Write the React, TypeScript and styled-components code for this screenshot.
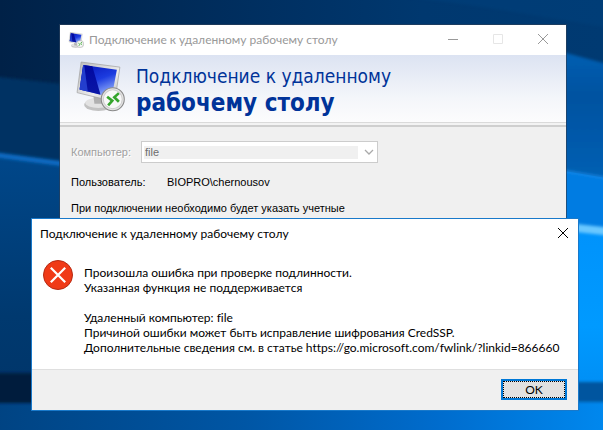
import React from "react";
import styled, { createGlobalStyle } from "styled-components";

const Global = createGlobalStyle`
  * { box-sizing: border-box; }
  html, body, #root { height: 100%; margin: 0; }
  body { font-family: Lato, "Noto Sans", sans-serif; font-size: 12px; line-height: 15px; font-variant-ligatures: none; color: #000; }
  button, select { font: inherit; color: inherit; }
  h1, h2, p { margin: 0; font-weight: 400; }
  svg { flex-shrink: 0; }
`;

const Desktop = styled.main`
  position: relative;
  height: 100%;
  overflow: hidden;
  background: #003a78;
`;

const Wallpaper = styled.svg`
  position: absolute;
  inset: 0;
  width: 100%;
  height: 100%;
`;

const Window = styled.section`
  position: absolute;
  display: flex;
  flex-direction: column;
`;

const MainWindow = styled(Window)`
  top: 25px;
  left: 60px;
  right: 37px;
  min-height: 300px;
  background: #f0f0f0;
  box-shadow: 0 0 0 1px rgba(40, 62, 90, 0.7);
`;

const ErrorDialog = styled(Window)`
  top: 218px;
  left: 31px;
  right: 24px;
  background: #fff;
  border: 1px solid #1979ca;
`;

const TitleBar = styled.header<{ $active?: boolean }>`
  display: flex;
  align-items: center;
  height: 30px;
  padding-left: 8px;
  background: #fff;
  color: ${(p) => (p.$active ? "#000" : "#999")};
`;

const Title = styled.h1`
  flex: 1;
  font-size: 12px;
  line-height: 16px;
  white-space: nowrap;
`;

const TitleIcon = styled.span`
  display: flex;
  margin-right: 5px;
`;

const Caption = styled.button<{ $width: number }>`
  display: grid;
  place-items: center;
  width: ${(p) => p.$width}px;
  height: 30px;
  padding: 0 0 2px;
  border: 0;
  background: none;
  &:disabled { color: #e6e6e6; }
`;

const Banner = styled.div`
  display: flex;
  gap: 11px;
  height: 67px;
  padding: 6px 14px;
  background: linear-gradient(#dce3f2, #f4f6fa 65%, #fcfcfd);
`;

const BannerText = styled.h2`
  padding-top: 2px;
  font-family: "DejaVu Sans Condensed", "DejaVu Sans", sans-serif;
  font-size: 19px;
  line-height: 27px;
  color: #003399;
  white-space: nowrap;
  strong { display: block; font-size: 24px; }
`;

const Divider = styled.div`
  height: 5px;
  border-top: 1px solid #dadada;
  border-bottom: 2px solid #cfcfcf;
  background: #f3f3f3;
`;

const Form = styled.form`
  display: flex;
  flex-direction: column;
  padding: 14px 11px;
  font-family: "Liberation Sans", Arial, sans-serif;
  font-size: 11px;
`;

const Row = styled.div`
  display: flex;
  align-items: center;
`;

const UserRow = styled(Row)`
  height: 38px;
`;

const Label = styled.label<{ $muted?: boolean; $width: number }>`
  width: ${(p) => p.$width}px;
  color: ${(p) => (p.$muted ? "#a0a0a0" : "#000")};
  text-shadow: ${(p) => (p.$muted ? "1px 1px 0 #fff" : "none")};
`;

const ComboBox = styled.div`
  display: grid;
  align-items: center;
  flex: 0 1 237px;
  height: 22px;
  background: #fff;
  border: 1px solid #ccc;
  > * { grid-area: 1 / 1; }
  svg { justify-self: end; margin-right: 2px; pointer-events: none; }
`;

const ComboSelect = styled.select`
  appearance: none;
  height: 13px;
  margin: 0 19px 0 2px;
  padding: 0 1px;
  border: 0;
  border-radius: 0;
  background: #f0f0f0;
  line-height: 13px;
  &:disabled { color: #6d6d6d; opacity: 1; }
`;

const DialogBody = styled.div`
  display: flex;
  gap: 10px;
  padding: 10px 10px 14px;
`;

const Message = styled.div`
  padding-top: 6px;
  white-space: nowrap;
  p + p { margin-top: 15px; }
`;

const DialogFooter = styled.footer`
  display: flex;
  justify-content: flex-end;
  padding: 9px 11px 10px;
  background: #f0f0f0;
  border-top: 1px solid #dfdfdf;
`;

const OkButton = styled.button`
  width: 66px;
  height: 21px;
  padding: 0;
  background: #e1e1e1;
  border: 2px solid #0078d7;
  outline: 1px dotted #000;
  outline-offset: -3px;
  line-height: 16px;
`;

function RemoteDesktopIcon({ size }: { size: number }) {
  return (
    <svg width={size} height={size} viewBox="0 0 50 50" aria-hidden="true">
      <defs>
        <linearGradient id="screen" x1=".3" y1="0" x2=".75" y2="1">
          <stop offset="0" stopColor="#0a1cc0" />
          <stop offset=".45" stopColor="#1c3ce0" />
          <stop offset="1" stopColor="#a9c4ff" />
        </linearGradient>
        <linearGradient id="shade" x1="0" y1="0" x2="0" y2="1">
          <stop offset="0" stopColor="#0008a0" />
          <stop offset="1" stopColor="#0a16a6" />
        </linearGradient>
        <linearGradient id="frame" x1="0" y1="0" x2="1" y2="1">
          <stop offset="0" stopColor="#b9b9b9" />
          <stop offset=".6" stopColor="#ededed" />
          <stop offset="1" stopColor="#b4b4b4" />
        </linearGradient>
      </defs>
      <ellipse cx="24" cy="43" rx="14" ry="6" fill="#c2c2c2" />
      <ellipse cx="24" cy="41" rx="13" ry="5" fill="#e2e2e2" />
      <path d="M19 34h12v8H20z" fill="#b0b0b0" />
      <path d="M7 1 45 6 40 40 3 31z" fill="url(#frame)" stroke="#a0a0a0" strokeWidth=".7" />
      <path d="M9 4 42 8.500 37 35.500 5.500 28z" fill="url(#screen)" />
      <path d="M9 4 18 5.200 26 33 5.500 28z" fill="url(#shade)" />
      <path d="M9 4h1L13.500 30l-8-2z" fill="#2b4ad8" opacity=".8" />
      <circle cx="38" cy="37.500" r="11.300" fill="#e4e4e4" stroke="#888" strokeWidth="1" />
      <circle cx="38" cy="37.500" r="9.300" fill="#f8f8f8" stroke="#cdcdcd" />
      <path d="m32.500 35 5 4-4 4.500M44 31.500l-4.500 4 4.500 4.500" fill="none" stroke="#35a52d" strokeWidth="2.600" />
    </svg>
  );
}

function CloseGlyph() {
  return (
    <svg width="12" height="12" viewBox="0 0 12 12" aria-hidden="true">
      <path d="m1 1 10 10M11 1 1 11" stroke="currentColor" />
    </svg>
  );
}

function ErrorIcon() {
  return (
    <svg width="32" height="32" viewBox="0 0 32 32" role="img" aria-label="Ошибка">
      <circle cx="16" cy="16" r="14.500" fill="#f03a17" stroke="#b52a13" />
      <path d="m8.800 8.800 14.400 14.400m0-14.400L8.800 23.200" stroke="#fff" strokeWidth="2.200" />
    </svg>
  );
}

function DesktopWallpaper() {
  return (
    <Wallpaper viewBox="0 0 603 430" preserveAspectRatio="none" aria-hidden="true">
      <defs>
        <linearGradient id="top" x1="0" x2="1">
          <stop offset="0" stopColor="#002147" />
          <stop offset=".45" stopColor="#003062" />
          <stop offset=".7" stopColor="#00386f" />
          <stop offset="1" stopColor="#003a72" />
        </linearGradient>
        <linearGradient id="left" x1="0" y1="0" x2="0" y2="1">
          <stop offset="0" stopColor="#00478a" />
          <stop offset=".6" stopColor="#00396f" />
          <stop offset="1" stopColor="#003468" />
        </linearGradient>
        <linearGradient id="right" x1="0" y1="0" x2="0" y2="1">
          <stop offset="0" stopColor="#0060b4" />
          <stop offset=".3" stopColor="#0052a0" />
          <stop offset="1" stopColor="#0064ba" />
        </linearGradient>
        <linearGradient id="glow" x1="0" y1="0" x2="0" y2="1">
          <stop offset="0" stopColor="#0092fb" />
          <stop offset=".5" stopColor="#009aff" />
          <stop offset="1" stopColor="#0087ee" />
        </linearGradient>
        <linearGradient id="bottom" x1="0" x2="1">
          <stop offset="0" stopColor="#004382" />
          <stop offset=".4" stopColor="#0056a5" />
          <stop offset=".7" stopColor="#006ccd" />
          <stop offset="1" stopColor="#008cf3" />
        </linearGradient>
        <filter id="soft" x="-20%" y="-50%" width="140%" height="200%"><feGaussianBlur stdDeviation="1.500" /></filter>
      </defs>
      <rect width="603" height="430" fill="url(#top)" />
      <path d="M340-10q130 12 280 40V-10z" fill="#00437f" opacity=".4" filter="url(#soft)" />
      <path d="m-10 76 90 10v90H-10z" fill="#003263" filter="url(#soft)" />
      <path d="m-10 154 90 11v260H-10z" fill="url(#left)" />
      <path d="m-10 154 90 12" stroke="#0f6ac2" strokeWidth="5" filter="url(#soft)" />
      <path d="m540 46 90 24v140h-90z" fill="url(#right)" filter="url(#soft)" />
      <path d="m540 167 90 15v80h-90z" fill="#007ce2" />
      <path d="m540 167 90 15" stroke="#1b8ae8" strokeWidth="2" filter="url(#soft)" />
      <path d="m540 222 90 10v198h-90z" fill="url(#glow)" />
      <path d="m540 224 90 10" stroke="#69c7ff" strokeWidth="8" filter="url(#soft)" />
      <rect x="-10" y="402" width="640" height="40" fill="url(#bottom)" />
      <rect x="-10" y="373" width="60" height="30" fill="#001c3c" filter="url(#soft)" />
      <rect x="560" y="382" width="60" height="20" fill="#00549f" filter="url(#soft)" />
    </Wallpaper>
  );
}

export default function App() {
  return (
    <>
      <Global />
      <Desktop>
        <DesktopWallpaper />
        <MainWindow aria-label="Подключение к удаленному рабочему столу">
          <TitleBar>
            <TitleIcon><RemoteDesktopIcon size={16} /></TitleIcon>
            <Title>Подключение к удаленному рабочему столу</Title>
            <Caption $width={45} aria-label="Свернуть">
              <svg width="10" height="10" viewBox="0 0 10 10"><path d="M0 5.500h10" stroke="currentColor" /></svg>
            </Caption>
            <Caption $width={45} aria-label="Развернуть" disabled>
              <svg width="10" height="10" viewBox="0 0 10 10"><path d="M.5.5h9v9h-9z" fill="none" stroke="currentColor" /></svg>
            </Caption>
            <Caption $width={46} aria-label="Закрыть"><CloseGlyph /></Caption>
          </TitleBar>
          <Banner>
            <RemoteDesktopIcon size={51} />
            <BannerText>Подключение к удаленному <strong>рабочему столу</strong></BannerText>
          </Banner>
          <Divider />
          <Form onSubmit={(e) => e.preventDefault()}>
            <Row>
              <Label htmlFor="computer" $muted $width={70}>Компьютер:</Label>
              <ComboBox>
                <ComboSelect id="computer" disabled defaultValue="file"><option>file</option></ComboSelect>
                <svg width="12" height="8" viewBox="0 0 12 8"><path d="m2 2 4 4 4-4" fill="none" stroke="#aaa" strokeWidth="1.300" /></svg>
              </ComboBox>
            </Row>
            <UserRow>
              <Label as="span" $width={96}>Пользователь:</Label>
              <span>BIOPRO\chernousov</span>
            </UserRow>
            <p>При подключении необходимо будет указать учетные</p>
          </Form>
        </MainWindow>
        <ErrorDialog role="dialog" aria-labelledby="error-title">
          <TitleBar $active>
            <Title id="error-title">Подключение к удаленному рабочему столу</Title>
            <Caption $width={30} aria-label="Закрыть"><CloseGlyph /></Caption>
          </TitleBar>
          <DialogBody>
            <ErrorIcon />
            <Message>
              <p>Произошла ошибка при проверке подлинности.<br />Указанная функция не поддерживается</p>
              <p>
                Удаленный компьютер: file<br />
                Причиной ошибки может быть исправление шифрования CredSSP.<br />
                Дополнительные сведения см. в статье https://go.microsoft.com/fwlink/?linkid=866660
              </p>
            </Message>
          </DialogBody>
          <DialogFooter><OkButton>OK</OkButton></DialogFooter>
        </ErrorDialog>
      </Desktop>
    </>
  );
}
